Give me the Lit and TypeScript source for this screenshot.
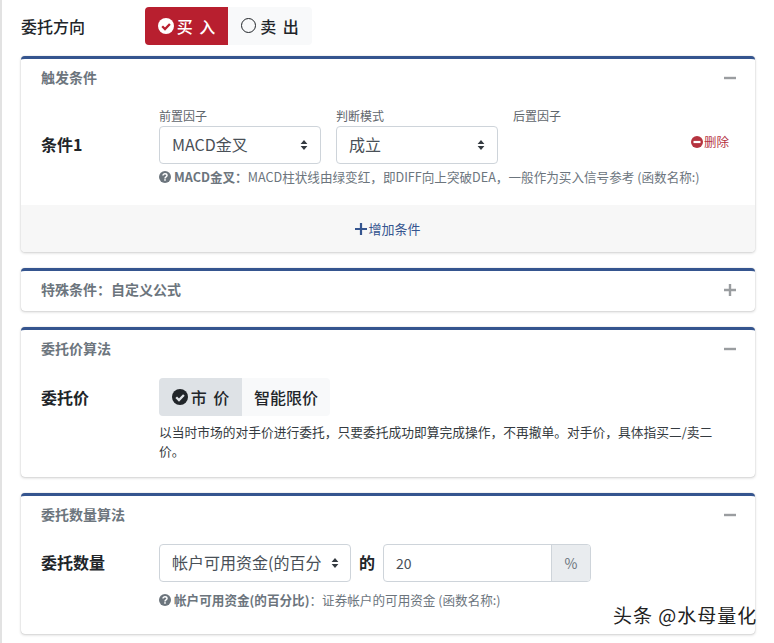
import { LitElement, html, css } from "lit";
import { customElement } from "lit/decorators.js";

const check = (c: string, tick: string) => html`<svg class="ic" viewBox="0 0 16 16"><circle cx="8" cy="8" r="8" fill="${c}"/><path d="M4.2 8.2 7 11l4.9-5" fill="none" stroke="${tick}" stroke-width="2.3"/></svg>`;
const help = html`<svg class="hic" viewBox="0 0 12 12"><circle cx="6" cy="6" r="6" fill="#6c757d"/><path d="M4 4.6C4 3.4 5 2.8 6 2.8s2 .6 2 1.7c0 1.5-2 1.4-2 2.9" fill="none" stroke="#fff" stroke-width="1.5"/><rect x="5.2" y="8.2" width="1.6" height="1.5" fill="#fff"/></svg>`;
const arrows = html`<svg class="arr" viewBox="0 0 8 12"><path d="M4 1 7.4 5H.6ZM4 11 .6 7H7.4Z" fill="#343a40"/></svg>`;
const minus = html`<svg class="tool" viewBox="0 0 12 12"><rect x="0" y="4.8" width="12" height="2.4" fill="#9a9da0"/></svg>`;
const plus = html`<svg class="tool" viewBox="0 0 12 12"><path d="M0 4.8h4.8V0h2.4v4.8H12v2.4H7.2V12H4.8V7.2H0Z" fill="#9a9da0"/></svg>`;

@customElement("app-root")
export class AppRoot extends LitElement {
  static styles = css`
    :host { display: block; width: 774px; height: 643px; overflow: hidden; box-sizing: border-box; background: #fff; position: relative;
      padding: 7px 19px 0 21px; font-family: "Noto Sans CJK SC", "Noto Sans", sans-serif; color: #212529; font-size: 14px; }
    :host::before { content: ""; position: absolute; left: 0; top: 0; bottom: 0; width: 2px; background: #e2e2e2; }
    .dir { display: flex; align-items: center; height: 38px; margin-bottom: 11px; }
    .dir-label { width: 124px; font-size: 16px; font-weight: 500; line-height: 38px; height: 38px; margin-top: -1px; }
    .seg { display: flex; height: 38px; }
    .seg > div { display: flex; align-items: center; justify-content: center; font-size: 16px; font-weight: 500; gap: 3px; word-spacing: 3px; padding-bottom: 1px; box-sizing: border-box; }
    .buy { width: 83px; background: #b81f2f; color: #fff; border-radius: 4px 0 0 4px; gap: 4px; }
    .sell { width: 84px; background: #f8f9fa; border-radius: 0 4px 4px 0; }
    .ic { width: 16px; height: 16px; flex: none; }
    .ring { width: 15px; height: 15px; border: 1.5px solid #212529; border-radius: 50%; box-sizing: border-box; flex: none; margin-right: 1px; }
    .card { background: #fff; border-top: 3px solid #35558f; border-radius: 4px; margin-bottom: 16px;
      box-shadow: 0 0 1px rgba(0,0,0,.25), 0 1px 3px rgba(0,0,0,.18); }
    .head { display: flex; justify-content: space-between; align-items: center; height: 39px; box-sizing: border-box; padding: 0 20px 2px; font-size: 14px; font-weight: 700; color: #6c757d; }
    .head span { padding-bottom: 2px; }
    .card.closed .head { height: 40px; }
    .tool { width: 12px; height: 12px; margin-right: -1px; }
    .body { padding: 0 20px; }
    .row { display: flex; }
    .lab { width: 118px; flex: none; font-size: 16px; font-weight: 700; height: 38px; line-height: 36px; }
    .fields { display: flex; gap: 15px; flex: 1; }
    .field { width: 162px; }
    .flab { font-size: 12px; line-height: 16px; color: #5f666c; height: 18px; }
    .sel { box-sizing: border-box; display: flex; align-items: center; justify-content: space-between; height: 38px; background: #fff; border: 1px solid #ced4da; border-radius: 4px; padding: 0 12px 2px; font-size: 16px; color: #495057; }
    .arr { width: 8px; height: 12px; flex: none; margin-top: 2px; }
    .cond { padding-top: 10px; }
    .cond .lab { margin-top: 18px; }
    .del { display: flex; align-items: center; gap: 1px; color: #b5333f; font-size: 12.5px; position: absolute; left: 1px; top: 0; white-space: nowrap; }
    .delwrap { position: relative; flex: none; width: 40px; margin-top: 24px; margin-right: 5px; height: 18px; }
    .delic { width: 12px; height: 12px; flex: none; }
    .help { display: flex; align-items: center; margin: 4px 0 0 118px; font-size: 12.6px; line-height: 18px; color: #6c757d; white-space: nowrap; }
    .help b { font-weight: 700; color: #6c757d; margin-left: 3px; }
    .hic { width: 12px; height: 12px; flex: none; }
    .foot { margin-top: 19px; height: 47px; background: #f7f7f7; display: flex; align-items: center; justify-content: center; font-size: 13px; color: #35558f; border-radius: 0 0 4px 4px; gap: 1px; }
    .foot svg { width: 12px; height: 12px; }
    .price { padding-top: 9px; }
    .price .lab { line-height: 38px; }
    .seg2 > div { color: #212529; }
    .mkt { width: 83px; background: #dee2e6; border-radius: 4px 0 0 4px; }
    .smart { width: 88px; background: #f8f9fa; border-radius: 0 4px 4px 0; }
    .desc { margin: 6px 0 0 118px; font-size: 12.75px; line-height: 19px; color: #343a40; padding-bottom: 17px; padding-right: 15px; }
    .qty { padding-top: 9px; }
    .qsel { width: 192px; padding-right: 11px; white-space: nowrap; gap: 8px; }
    .qsel span { overflow: hidden; flex: 1; }
    .de { width: 32px; text-align: center; line-height: 36px; height: 38px; font-size: 16px; font-weight: 700; }
    .ig { display: flex; width: 208px; height: 38px; box-sizing: border-box; border: 1px solid #ced4da; border-radius: 4px; font-size: 14px; color: #495057; }
    .ig .val { flex: 1; padding-left: 12px; line-height: 36px; }
    .ig .unit { width: 38px; background: #e9ecef; border-left: 1px solid #ced4da; text-align: center; line-height: 36px; border-radius: 0 3px 3px 0; color: #6c757d; }
    .qhelp { padding-bottom: 25px; margin-top: 9px; }
    .mark { position: absolute; left: 613px; top: 602px; font-size: 19px; line-height: 26px; color: #222; white-space: nowrap; letter-spacing: 1px; text-shadow: 0 0 2px #fff; }
  `;

  render() {
    return html`
      <div class="dir">
        <div class="dir-label">委托方向</div>
        <div class="seg">
          <div class="buy">${check("#fff", "#b81f2f")}<span>买 入</span></div>
          <div class="sell"><span class="ring"></span><span>卖 出</span></div>
        </div>
      </div>

      <section class="card">
        <div class="head"><span>触发条件</span>${minus}</div>
        <div class="body">
          <div class="row cond">
            <div class="lab">条件1</div>
            <div class="fields">
              <div class="field"><div class="flab">前置因子</div><div class="sel"><span>MACD金叉</span>${arrows}</div></div>
              <div class="field"><div class="flab">判断模式</div><div class="sel"><span>成立</span>${arrows}</div></div>
              <div class="field"><div class="flab">后置因子</div></div>
            </div>
            <div class="delwrap"><div class="del">
              <svg class="delic" viewBox="0 0 12 12"><circle cx="6" cy="6" r="6" fill="#b5333f"/><rect x="2.5" y="4.9" width="7" height="2.2" fill="#fff"/></svg><span>删除</span>
            </div></div>
          </div>
          <div class="help">${help}<b>MACD金叉：</b><span>MACD柱状线由绿变红，即DIFF向上突破DEA，一般作为买入信号参考 (函数名称:)</span></div>
        </div>
        <div class="foot">
          <svg viewBox="0 0 12 12"><path d="M0 4.9h4.9V0h2.2v4.9H12v2.2H7.1V12H4.9V7.1H0Z" fill="#35558f"/></svg><span>增加条件</span>
        </div>
      </section>

      <section class="card closed">
        <div class="head"><span>特殊条件：自定义公式</span>${plus}</div>
      </section>

      <section class="card">
        <div class="head"><span>委托价算法</span>${minus}</div>
        <div class="body">
          <div class="row price">
            <div class="lab">委托价</div>
            <div class="seg seg2">
              <div class="mkt">${check("#212529", "#dee2e6")}<span>市 价</span></div>
              <div class="smart"><span>智能限价</span></div>
            </div>
          </div>
          <div class="desc">以当时市场的对手价进行委托，只要委托成功即算完成操作，不再撤单。对手价，具体指买二/卖二价。</div>
        </div>
      </section>

      <section class="card">
        <div class="head"><span>委托数量算法</span>${minus}</div>
        <div class="body">
          <div class="row qty">
            <div class="lab">委托数量</div>
            <div class="sel qsel"><span>帐户可用资金(的百分</span>${arrows}</div>
            <div class="de">的</div>
            <div class="ig"><div class="val">20</div><div class="unit">%</div></div>
          </div>
          <div class="help qhelp">${help}<b>帐户可用资金(的百分比)</b><span>：证券帐户的可用资金 (函数名称:)</span></div>
        </div>
      </section>

      <div class="mark">头条 @水母量化</div>
    `;
  }
}
